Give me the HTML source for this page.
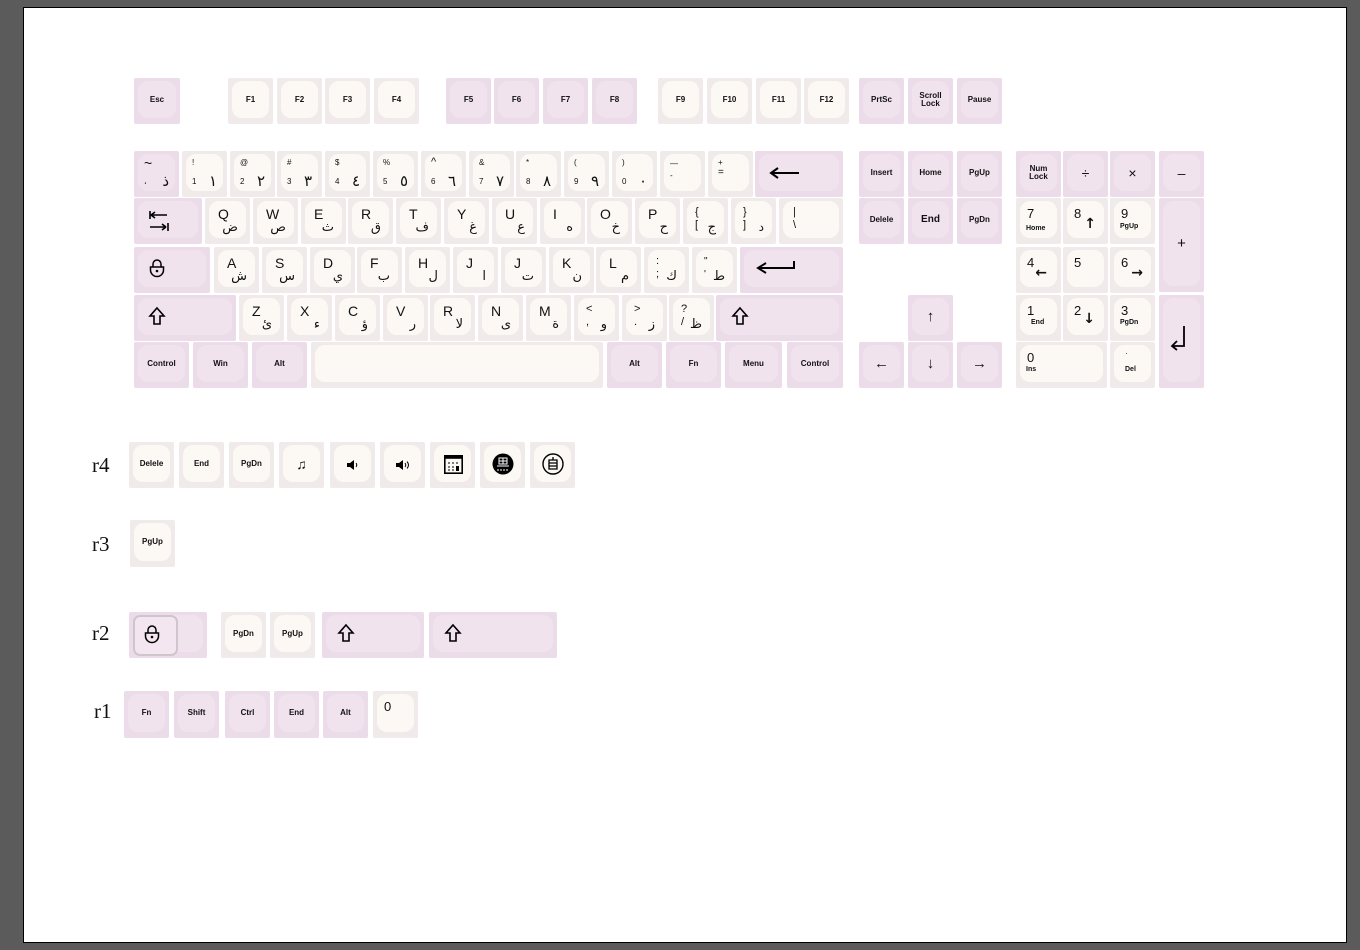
<!DOCTYPE html>
<html><head><meta charset="utf-8"><style>
html,body{margin:0;padding:0}
body{width:1360px;height:950px;background:#5b5b5b;position:relative;overflow:hidden;font-family:"Liberation Sans",sans-serif;color:#111}
#pg{position:absolute;left:23px;top:7px;width:1322px;height:934px;background:#fff;border:1px solid #000}
.k{position:absolute;height:46px;width:45px;border-radius:2px}
.k::before{content:"";position:absolute;left:4px;right:4px;top:3px;bottom:6px;border-radius:10px}
.p{background:#ecdbe8}.p::before{background:#f1e3ee}
.w{background:#f0ebea}.w::before{background:#fcf9f5}
.k>*{position:absolute;z-index:1}
.c{left:0;right:0;top:0;bottom:3px;display:flex;align-items:center;justify-content:center;font-size:8px;font-weight:bold;text-align:center;line-height:8px}
.t{left:10px;top:7px;font-size:8px;line-height:9px}
.b{left:10px;top:26px;font-size:8px}
.a{right:10px;top:21px;font-size:15px;font-family:"DejaVu Sans",sans-serif}
.L{left:13px;top:8px;font-size:14px}
.A{right:12px;top:22px;font-size:13px;font-family:"DejaVu Sans",sans-serif}
.t2{left:12px;top:8px;font-size:11px;line-height:13px}
.lab{position:absolute;font-family:"Liberation Serif",serif;font-size:21px}
svg{overflow:visible}
</style></head><body><div id="pg"></div>

<!-- function row -->
<div class="k p" style="left:134px;top:78px;width:46px"><div class="c">Esc</div></div>
<div class="k w" style="left:228px;top:78px"><div class="c">F1</div></div>
<div class="k w" style="left:277px;top:78px"><div class="c">F2</div></div>
<div class="k w" style="left:325px;top:78px"><div class="c">F3</div></div>
<div class="k w" style="left:374px;top:78px"><div class="c">F4</div></div>
<div class="k p" style="left:446px;top:78px"><div class="c">F5</div></div>
<div class="k p" style="left:494px;top:78px"><div class="c">F6</div></div>
<div class="k p" style="left:543px;top:78px"><div class="c">F7</div></div>
<div class="k p" style="left:592px;top:78px"><div class="c">F8</div></div>
<div class="k w" style="left:658px;top:78px"><div class="c">F9</div></div>
<div class="k w" style="left:707px;top:78px"><div class="c">F10</div></div>
<div class="k w" style="left:756px;top:78px"><div class="c">F11</div></div>
<div class="k w" style="left:804px;top:78px"><div class="c">F12</div></div>
<div class="k p" style="left:859px;top:78px"><div class="c">PrtSc</div></div>
<div class="k p" style="left:908px;top:78px"><div class="c">Scroll<br>Lock</div></div>
<div class="k p" style="left:957px;top:78px"><div class="c">Pause</div></div>

<!-- number row -->
<div class="k p" style="left:134px;top:151px"><div class="t" style="font-size:14px;line-height:10px">~</div><div class="b">،</div><div class="a">ذ</div></div>
<div class="k w" style="left:182px;top:151px"><div class="t">!</div><div class="b">1</div><div class="a">١</div></div>
<div class="k w" style="left:230px;top:151px"><div class="t">@</div><div class="b">2</div><div class="a">٢</div></div>
<div class="k w" style="left:277px;top:151px"><div class="t">#</div><div class="b">3</div><div class="a">٣</div></div>
<div class="k w" style="left:325px;top:151px"><div class="t">$</div><div class="b">4</div><div class="a">٤</div></div>
<div class="k w" style="left:373px;top:151px"><div class="t">%</div><div class="b">5</div><div class="a">٥</div></div>
<div class="k w" style="left:421px;top:151px"><div class="t" style="font-size:11px">^</div><div class="b">6</div><div class="a">٦</div></div>
<div class="k w" style="left:469px;top:151px"><div class="t">&amp;</div><div class="b">7</div><div class="a">٧</div></div>
<div class="k w" style="left:516px;top:151px"><div class="t">*</div><div class="b">8</div><div class="a">٨</div></div>
<div class="k w" style="left:564px;top:151px"><div class="t">(</div><div class="b">9</div><div class="a">٩</div></div>
<div class="k w" style="left:612px;top:151px"><div class="t">)</div><div class="b">0</div><div class="a">٠</div></div>
<div class="k w" style="left:660px;top:151px"><div class="t" style="top:8px">—</div><div class="b" style="top:20px">-</div></div>
<div class="k w" style="left:708px;top:151px"><div class="t">+</div><div class="b" style="top:16px;font-size:10px">=</div></div>
<div class="k p" style="left:755px;top:151px;width:88px"><svg style="left:14px;top:16px" width="32" height="12"><path d="M30 6H3M9 1L2 6L9 11" stroke="#000" stroke-width="2" fill="none"/></svg></div>

<!-- Q row -->
<div class="k p" style="left:134px;top:198px;width:68px"><svg style="left:15px;top:12px" width="20" height="22"><path d="M1 1V9M2 5H18M2 5L6 2M2 5L6 8M19 13V21M1 17H17M17 17L13 14M17 17L13 20" stroke="#000" stroke-width="1.6" fill="none"/></svg></div>
<div class="k w" style="left:205px;top:198px"><div class="L">Q</div><div class="A">ض</div></div>
<div class="k w" style="left:253px;top:198px"><div class="L">W</div><div class="A">ص</div></div>
<div class="k w" style="left:301px;top:198px"><div class="L">E</div><div class="A">ث</div></div>
<div class="k w" style="left:348px;top:198px"><div class="L">R</div><div class="A">ق</div></div>
<div class="k w" style="left:396px;top:198px"><div class="L">T</div><div class="A">ف</div></div>
<div class="k w" style="left:444px;top:198px"><div class="L">Y</div><div class="A">غ</div></div>
<div class="k w" style="left:492px;top:198px"><div class="L">U</div><div class="A">ع</div></div>
<div class="k w" style="left:540px;top:198px"><div class="L">I</div><div class="A">ه</div></div>
<div class="k w" style="left:587px;top:198px"><div class="L">O</div><div class="A">خ</div></div>
<div class="k w" style="left:635px;top:198px"><div class="L">P</div><div class="A">ح</div></div>
<div class="k w" style="left:683px;top:198px"><div class="t2">{<br>[</div><div class="A">ج</div></div>
<div class="k w" style="left:731px;top:198px"><div class="t2">}<br>]</div><div class="A" style="font-size:12px">د</div></div>
<div class="k w" style="left:779px;top:198px;width:64px"><div class="t2" style="left:14px">|<br>\</div></div>

<!-- A row -->
<div class="k p" style="left:134px;top:247px;width:76px"><svg style="left:15px;top:12px" width="16" height="18"><path d="M4 8V5a4 4 0 0 1 8 0V8M1.5 8H14.5V11a6.5 6.5 0 0 1-13 0Z" stroke="#000" stroke-width="1.5" fill="none"/><circle cx="8" cy="12" r="1.3"/></svg></div>
<div class="k w" style="left:214px;top:247px"><div class="L">A</div><div class="A">ش</div></div>
<div class="k w" style="left:262px;top:247px"><div class="L">S</div><div class="A">س</div></div>
<div class="k w" style="left:310px;top:247px"><div class="L">D</div><div class="A">ي</div></div>
<div class="k w" style="left:357px;top:247px"><div class="L">F</div><div class="A">ب</div></div>
<div class="k w" style="left:405px;top:247px"><div class="L">H</div><div class="A">ل</div></div>
<div class="k w" style="left:453px;top:247px"><div class="L">J</div><div class="A">ا</div></div>
<div class="k w" style="left:501px;top:247px"><div class="L">J</div><div class="A">ت</div></div>
<div class="k w" style="left:549px;top:247px"><div class="L">K</div><div class="A">ن</div></div>
<div class="k w" style="left:596px;top:247px"><div class="L">L</div><div class="A">م</div></div>
<div class="k w" style="left:644px;top:247px"><div class="t2">:<br>;</div><div class="A">ك</div></div>
<div class="k w" style="left:692px;top:247px"><div class="t2" style="font-size:10px">"<br>'</div><div class="A">ط</div></div>
<div class="k p" style="left:740px;top:247px;width:103px"><svg style="left:16px;top:13px" width="40" height="14"><path d="M38 1V8H3M10 3L2 8L10 13" stroke="#000" stroke-width="2" fill="none"/></svg></div>

<!-- Z row -->
<div class="k p" style="left:134px;top:295px;width:102px"><svg style="left:15px;top:12px" width="16" height="18"><path d="M8 1L15 9H11V17H5V9H1Z" stroke="#000" stroke-width="1.6" fill="none"/></svg></div>
<div class="k w" style="left:239px;top:295px"><div class="L">Z</div><div class="A">ئ</div></div>
<div class="k w" style="left:287px;top:295px"><div class="L">X</div><div class="A">ء</div></div>
<div class="k w" style="left:335px;top:295px"><div class="L">C</div><div class="A">ؤ</div></div>
<div class="k w" style="left:383px;top:295px"><div class="L">V</div><div class="A">ر</div></div>
<div class="k w" style="left:430px;top:295px"><div class="L">R</div><div class="A">لا</div></div>
<div class="k w" style="left:478px;top:295px"><div class="L">N</div><div class="A">ى</div></div>
<div class="k w" style="left:526px;top:295px"><div class="L">M</div><div class="A">ة</div></div>
<div class="k w" style="left:574px;top:295px"><div class="t2">&lt;<br>,</div><div class="A">و</div></div>
<div class="k w" style="left:622px;top:295px"><div class="t2">&gt;<br>.</div><div class="A">ز</div></div>
<div class="k w" style="left:669px;top:295px"><div class="t2">?<br>/</div><div class="A">ظ</div></div>
<div class="k p" style="left:716px;top:295px;width:127px"><svg style="left:16px;top:12px" width="16" height="18"><path d="M8 1L15 9H11V17H5V9H1Z" stroke="#000" stroke-width="1.6" fill="none"/></svg></div>

<!-- bottom row -->
<div class="k p" style="left:134px;top:342px;width:55px"><div class="c">Control</div></div>
<div class="k p" style="left:193px;top:342px;width:55px"><div class="c">Win</div></div>
<div class="k p" style="left:252px;top:342px;width:55px"><div class="c">Alt</div></div>
<div class="k w" style="left:311px;top:342px;width:292px"></div>
<div class="k p" style="left:607px;top:342px;width:55px"><div class="c">Alt</div></div>
<div class="k p" style="left:666px;top:342px;width:55px"><div class="c">Fn</div></div>
<div class="k p" style="left:725px;top:342px;width:57px"><div class="c">Menu</div></div>
<div class="k p" style="left:787px;top:342px;width:56px"><div class="c">Control</div></div>

<!-- nav -->
<div class="k p" style="left:859px;top:151px"><div class="c">Insert</div></div>
<div class="k p" style="left:908px;top:151px"><div class="c">Home</div></div>
<div class="k p" style="left:957px;top:151px"><div class="c">PgUp</div></div>
<div class="k p" style="left:859px;top:198px"><div class="c">Delele</div></div>
<div class="k p" style="left:908px;top:198px"><div class="c" style="font-size:10px">End</div></div>
<div class="k p" style="left:957px;top:198px"><div class="c">PgDn</div></div>
<div class="k p" style="left:908px;top:295px"><div class="c" style="font-size:15px">↑</div></div>
<div class="k p" style="left:859px;top:342px"><div class="c" style="font-size:15px">←</div></div>
<div class="k p" style="left:908px;top:342px"><div class="c" style="font-size:15px">↓</div></div>
<div class="k p" style="left:957px;top:342px"><div class="c" style="font-size:15px">→</div></div>

<!-- numpad -->
<div class="k p" style="left:1016px;top:151px"><div class="c">Num<br>Lock</div></div>
<div class="k p" style="left:1063px;top:151px"><div class="c" style="font-size:14px;font-weight:normal">÷</div></div>
<div class="k p" style="left:1110px;top:151px"><div class="c" style="font-size:14px;font-weight:normal">×</div></div>
<div class="k p" style="left:1159px;top:151px"><div class="c" style="font-size:14px;font-weight:normal">–</div></div>
<div class="k w" style="left:1016px;top:198px"><div class="L" style="font-size:13px;left:11px">7</div><div class="b" style="top:27px;font-weight:bold;font-size:7px">Home</div></div>
<div class="k w" style="left:1063px;top:198px"><div class="L" style="font-size:13px;left:11px">8</div><div class="A" style="font-size:14px;top:18px;font-weight:bold">↑</div></div>
<div class="k w" style="left:1110px;top:198px"><div class="L" style="font-size:13px;left:11px">9</div><div class="b" style="top:25px;font-weight:bold;font-size:7px">PgUp</div></div>
<div class="k p" style="left:1159px;top:198px;height:94px"><div class="c" style="font-size:15px;font-weight:normal">+</div></div>
<div class="k w" style="left:1016px;top:247px"><div class="L" style="font-size:13px;left:11px">4</div><div class="A" style="font-size:14px;top:18px;right:14px;font-weight:bold">←</div></div>
<div class="k w" style="left:1063px;top:247px"><div class="L" style="font-size:13px;left:11px">5</div></div>
<div class="k w" style="left:1110px;top:247px"><div class="L" style="font-size:13px;left:11px">6</div><div class="A" style="font-size:14px;top:18px;font-weight:bold">→</div></div>
<div class="k w" style="left:1016px;top:295px"><div class="L" style="font-size:13px;left:11px">1</div><div class="b" style="top:24px;left:15px;font-weight:bold;font-size:7px">End</div></div>
<div class="k w" style="left:1063px;top:295px"><div class="L" style="font-size:13px;left:11px">2</div><div class="A" style="font-size:14px;top:16px;right:13px;font-weight:bold">↓</div></div>
<div class="k w" style="left:1110px;top:295px"><div class="L" style="font-size:13px;left:11px">3</div><div class="b" style="top:24px;font-weight:bold;font-size:7px">PgDn</div></div>
<div class="k p" style="left:1159px;top:295px;height:93px"><svg style="left:12px;top:30px" width="16" height="26"><path d="M13 1V21H2M6 16L1 21L6 25" stroke="#000" stroke-width="1.8" fill="none"/></svg></div>
<div class="k w" style="left:1016px;top:342px;width:91px"><div class="L" style="font-size:13px;left:11px">0</div><div class="b" style="top:24px;font-weight:bold;font-size:7px">Ins</div></div>
<div class="k w" style="left:1110px;top:342px"><div class="t" style="left:15px">·</div><div class="b" style="top:24px;left:15px;font-weight:bold;font-size:7px">Del</div></div>

<!-- r4 -->
<div class="lab" style="left:92px;top:453px">r4</div>
<div class="k w" style="left:129px;top:442px"><div class="c">Delele</div></div>
<div class="k w" style="left:179px;top:442px"><div class="c">End</div></div>
<div class="k w" style="left:229px;top:442px"><div class="c">PgDn</div></div>
<div class="k w" style="left:279px;top:442px"><div class="c" style="font-size:14px">♫</div></div>
<div class="k w" style="left:330px;top:442px"><svg style="left:17px;top:18px" width="12" height="10"><path d="M0 3H3L7 0V10L3 7H0Z"/><path d="M9 3Q10.5 5 9 7" stroke="#000" fill="none"/></svg></div>
<div class="k w" style="left:380px;top:442px"><svg style="left:16px;top:18px" width="14" height="10"><path d="M0 3H3L7 0V10L3 7H0Z"/><path d="M9 3Q10.5 5 9 7M11 1.5Q14 5 11 8.5" stroke="#000" fill="none"/></svg></div>
<div class="k w" style="left:430px;top:442px"><svg style="left:14px;top:13px" width="19" height="19"><rect x="0.8" y="0.8" width="17.4" height="17.4" fill="none" stroke="#000" stroke-width="1.6"/><rect x="0.8" y="0.8" width="17.4" height="3" fill="#000"/><path d="M4 8h2M8 8h2M12 8h2M4 12h2M8 12h2M4 15h2M8 15h2" stroke="#000"/><rect x="12" y="11" width="3" height="5"/></svg></div>
<div class="k w" style="left:480px;top:442px"><svg style="left:12px;top:11px" width="22" height="22"><circle cx="11" cy="11" r="10.5"/><path d="M7 5h8v6H7zM11 5v6M7 8h8M5 13h12M6 16v2M9 16v2M12 16v2M15 16v2" stroke="#fff" fill="none"/></svg></div>
<div class="k w" style="left:530px;top:442px"><svg style="left:12px;top:11px" width="22" height="22"><circle cx="11" cy="11" r="10" stroke="#000" stroke-width="1.4" fill="none"/><path d="M7 7h8v9H7zM7 10h8M7 13h8M11 4v3" stroke="#000" stroke-width="1.3" fill="none"/></svg></div>

<!-- r3 -->
<div class="lab" style="left:92px;top:532px">r3</div>
<div class="k w" style="left:130px;top:520px;height:47px"><div class="c">PgUp</div></div>

<!-- r2 -->
<div class="lab" style="left:92px;top:621px">r2</div>
<div class="k p" style="left:129px;top:612px;width:78px"><div style="left:4px;top:3px;width:41px;height:37px;border:2px solid #cfc6cb;border-radius:7px;background:#f3e6f0"></div><svg style="left:15px;top:13px" width="16" height="18"><path d="M4 8V5a4 4 0 0 1 8 0V8M1.5 8H14.5V11a6.5 6.5 0 0 1-13 0Z" stroke="#000" stroke-width="1.5" fill="none"/><circle cx="8" cy="12" r="1.3"/></svg></div>
<div class="k w" style="left:221px;top:612px"><div class="c">PgDn</div></div>
<div class="k w" style="left:270px;top:612px"><div class="c">PgUp</div></div>
<div class="k p" style="left:322px;top:612px;width:102px"><svg style="left:16px;top:12px" width="16" height="18"><path d="M8 1L15 9H11V17H5V9H1Z" stroke="#000" stroke-width="1.6" fill="none"/></svg></div>
<div class="k p" style="left:429px;top:612px;width:128px"><svg style="left:16px;top:12px" width="16" height="18"><path d="M8 1L15 9H11V17H5V9H1Z" stroke="#000" stroke-width="1.6" fill="none"/></svg></div>

<!-- r1 -->
<div class="lab" style="left:94px;top:699px">r1</div>
<div class="k p" style="left:124px;top:691px;height:47px"><div class="c">Fn</div></div>
<div class="k p" style="left:174px;top:691px;height:47px"><div class="c">Shift</div></div>
<div class="k p" style="left:225px;top:691px;height:47px"><div class="c">Ctrl</div></div>
<div class="k p" style="left:274px;top:691px;height:47px"><div class="c">End</div></div>
<div class="k p" style="left:323px;top:691px;height:47px"><div class="c">Alt</div></div>
<div class="k w" style="left:373px;top:691px;height:47px"><div class="L" style="font-size:13px;left:11px">0</div></div>
</body></html>
